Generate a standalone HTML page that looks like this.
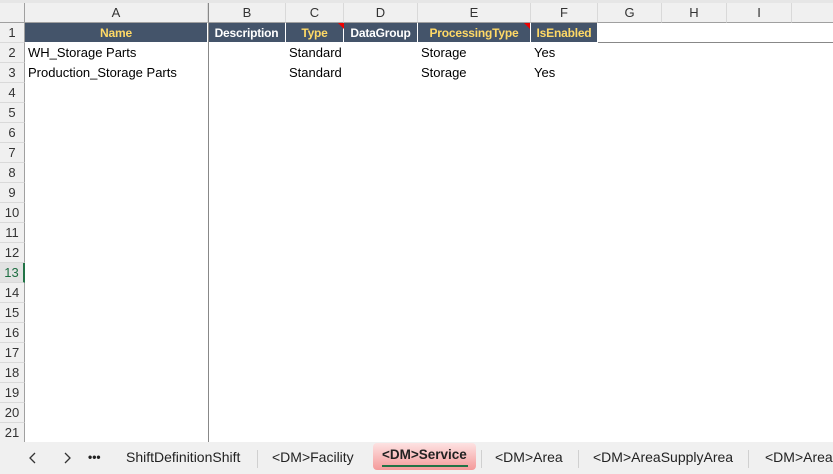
<!DOCTYPE html><html><head><style>
body{margin:0;width:833px;height:474px;overflow:hidden;background:#fff;font-family:"Liberation Sans",Calibri,sans-serif;position:relative}
div{position:absolute;box-sizing:border-box}
.ch{top:3px;height:20px;background:#f0f0f0;border-right:1px solid #d9d9d9;border-bottom:1px solid #a0a0a0;font-size:13px;color:#333;text-align:center;line-height:19px}
.rh{left:0;width:25px;height:20px;background:#f0f0f0;border-bottom:1px solid #d9d9d9;border-right:1px solid #a0a0a0;font-size:13px;color:#333;text-align:center;line-height:20px}
.h1{top:23px;height:20px;background:#44546a;color:#ffd966;font-weight:bold;font-size:12px;text-align:center;line-height:20px;border-right:1px solid #fff;overflow:hidden;white-space:nowrap;letter-spacing:-0.2px}
.c{font-size:13px;color:#000;line-height:20px;height:20px}
.tab{top:443px;height:28px;font-size:14px;color:#222;line-height:28px;white-space:nowrap}
.sep{top:450px;width:1px;height:18px;background:#d0d0d0}
</style></head><body>
<div style="left:0;top:0;width:833px;height:3px;background:#e6e6e6"></div>
<div class="ch" style="left:0;width:25px;border-right:1px solid #a0a0a0"></div>
<div class="ch" style="left:25px;width:183px">A</div>
<div class="ch" style="left:208px;width:78px;border-left:1px solid #888">B</div>
<div class="ch" style="left:286px;width:58px">C</div>
<div class="ch" style="left:344px;width:74px">D</div>
<div class="ch" style="left:418px;width:113px">E</div>
<div class="ch" style="left:531px;width:67px">F</div>
<div class="ch" style="left:598px;width:64px">G</div>
<div class="ch" style="left:662px;width:65px">H</div>
<div class="ch" style="left:727px;width:65px">I</div>
<div class="ch" style="left:792px;width:41px;border-right:none"></div>

<div class="h1" style="left:25px;width:183px">Name</div>
<div class="h1" style="left:208px;width:78px;color:#fff">Description</div>
<div class="h1" style="left:286px;width:58px">Type</div>
<div class="h1" style="left:344px;width:74px;color:#fff">DataGroup</div>
<div class="h1" style="left:418px;width:113px">ProcessingType</div>
<div class="h1" style="left:531px;width:67px">IsEnabled</div>
<div style="left:338px;top:23px;width:0;height:0;border-left:6px solid transparent;border-top:6px solid #e00"></div>
<div style="left:524px;top:23px;width:0;height:0;border-left:6px solid transparent;border-top:6px solid #e00"></div>
<div style="left:598px;top:42px;width:235px;height:1px;background:#888"></div>
<div style="left:25px;top:42px;width:573px;height:1px;background:#fff"></div>
<div style="left:208px;top:23px;width:1px;height:419px;background:#888"></div>

<div class="c" style="left:28px;top:43px">WH_Storage Parts</div>
<div class="c" style="left:289px;top:43px">Standard</div>
<div class="c" style="left:421px;top:43px">Storage</div>
<div class="c" style="left:534px;top:43px">Yes</div>
<div class="c" style="left:28px;top:63px">Production_Storage Parts</div>
<div class="c" style="left:289px;top:63px">Standard</div>
<div class="c" style="left:421px;top:63px">Storage</div>
<div class="c" style="left:534px;top:63px">Yes</div>

<div class="rh" style="top:23px">1</div><div class="rh" style="top:43px">2</div><div class="rh" style="top:63px">3</div><div class="rh" style="top:83px">4</div><div class="rh" style="top:103px">5</div><div class="rh" style="top:123px">6</div><div class="rh" style="top:143px">7</div><div class="rh" style="top:163px">8</div><div class="rh" style="top:183px">9</div><div class="rh" style="top:203px">10</div><div class="rh" style="top:223px">11</div><div class="rh" style="top:243px">12</div><div class="rh" style="top:263px;background:#e2e2e2;color:#1e6e42;border-right:2px solid #217346">13</div><div class="rh" style="top:283px">14</div><div class="rh" style="top:303px">15</div><div class="rh" style="top:323px">16</div><div class="rh" style="top:343px">17</div><div class="rh" style="top:363px">18</div><div class="rh" style="top:383px">19</div><div class="rh" style="top:403px">20</div><div class="rh" style="top:423px">21</div>

<div style="left:0;top:442px;width:833px;height:32px;background:#f0f0f0"></div>
<svg style="position:absolute;left:26px;top:451px" width="50" height="14"><path d="M9 2 L4 7 L9 12 M39 2 L44 7 L39 12" stroke="#333" stroke-width="1.3" fill="none"/></svg>
<div class="tab" style="left:88px;font-weight:bold;font-size:12px">&#8226;&#8226;&#8226;</div>
<div class="tab" style="left:126px">ShiftDefinitionShift</div>
<div class="sep" style="left:257px"></div>
<div class="tab" style="left:272px">&lt;DM&gt;Facility</div>
<div style="left:373px;top:443px;width:103px;height:27px;border-radius:4px;background:linear-gradient(#fde2e2,#f49a9a)"></div>
<div class="tab" style="left:382px;top:441px;font-weight:bold;font-size:13.5px">&lt;DM&gt;Service</div>
<div style="left:382px;top:465px;width:86px;height:2px;background:#217346"></div>
<div class="sep" style="left:481px"></div>
<div class="tab" style="left:495px">&lt;DM&gt;Area</div>
<div class="sep" style="left:578px"></div>
<div class="tab" style="left:593px">&lt;DM&gt;AreaSupplyArea</div>
<div class="sep" style="left:748px"></div>
<div class="tab" style="left:765px">&lt;DM&gt;Area</div>
</body></html>
